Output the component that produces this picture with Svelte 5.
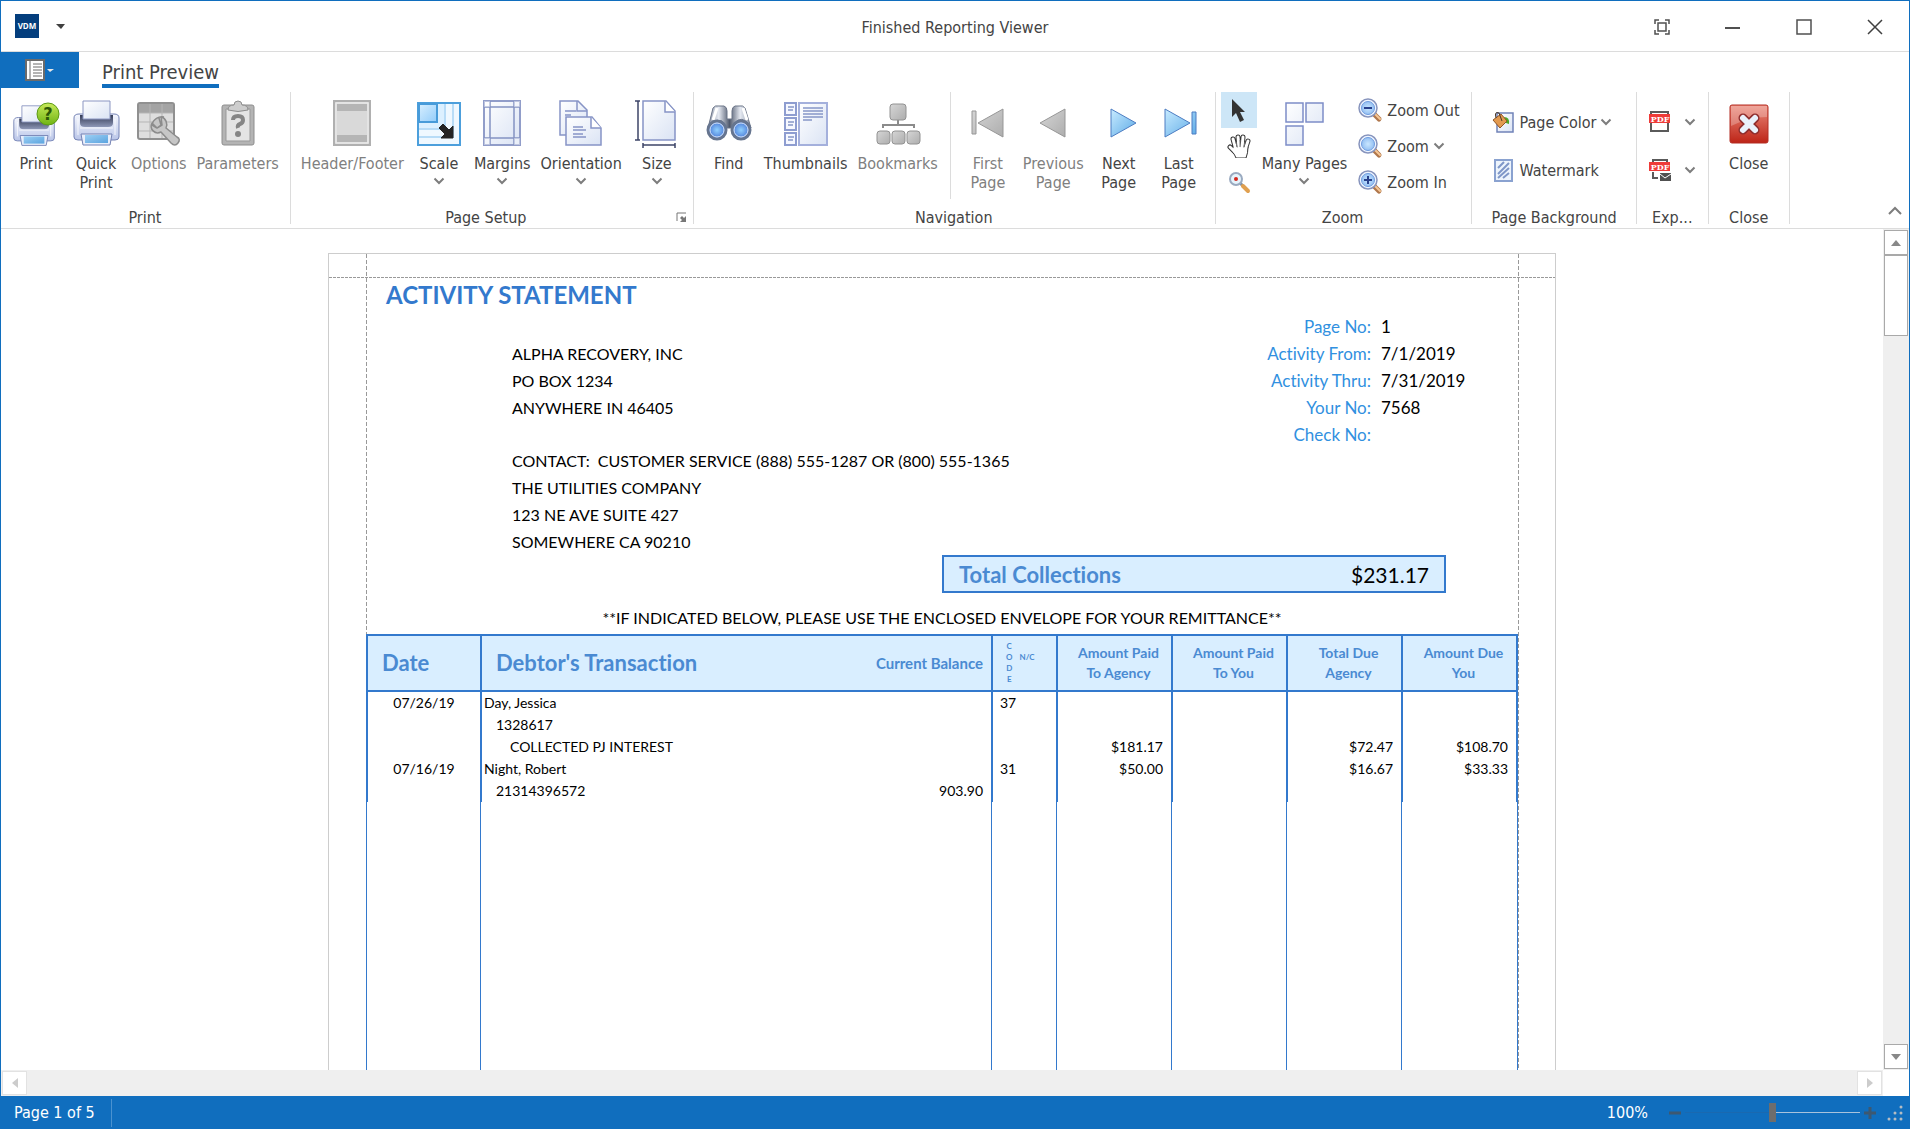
<script>
    const printTools = [
        { icon: 'print', lines: ['Print'] },
        { icon: 'quick', lines: ['Quick', 'Print'] },
        { icon: 'options', lines: ['Options'], disabled: true },
        { icon: 'parameters', lines: ['Parameters'], disabled: true }
    ];
    const setupTools = [
        { icon: 'header', lines: ['Header/Footer'], disabled: true },
        { icon: 'scale', lines: ['Scale'], menu: true },
        { icon: 'margins', lines: ['Margins'], menu: true },
        { icon: 'orientation', lines: ['Orientation'], menu: true },
        { icon: 'size', lines: ['Size'], menu: true }
    ];
    const findTools = [
        { icon: 'find', lines: ['Find'] },
        { icon: 'thumbnails', lines: ['Thumbnails'] },
        { icon: 'bookmarks', lines: ['Bookmarks'], disabled: true }
    ];
    const pageTools = [
        { icon: 'first', lines: ['First', 'Page'], disabled: true },
        { icon: 'previous', lines: ['Previous', 'Page'], disabled: true },
        { icon: 'next', lines: ['Next', 'Page'] },
        { icon: 'last', lines: ['Last', 'Page'] }
    ];

    const address = ['ALPHA RECOVERY, INC', 'PO BOX 1234', 'ANYWHERE IN 46405'];
    const contact = [
        'CONTACT:\u00a0 CUSTOMER SERVICE (888) 555-1287 OR (800) 555-1365',
        'THE UTILITIES COMPANY',
        '123 NE AVE SUITE 427',
        'SOMEWHERE CA 90210'
    ];
    const details = [
        ['Page No:', '1'],
        ['Activity From:', '7/1/2019'],
        ['Activity Thru:', '7/31/2019'],
        ['Your No:', '7568'],
        ['Check No:', '']
    ];
    const rows = [
        { date: '07/26/19', text: 'Day, Jessica', code: '37' },
        { text: '1328617', level: 1 },
        { text: 'COLLECTED PJ INTEREST', level: 2, agency: '$181.17', due: '$72.47', you: '$108.70' },
        { date: '07/16/19', text: 'Night, Robert', code: '31', agency: '$50.00', due: '$16.67', you: '$33.33' },
        { text: '21314396572', level: 1, balance: '903.90' }
    ];

    let tool = $state('pointer');
    let zoom = $state(100);
</script>

{#snippet chevron()}
    <svg class="chevron" width="12" height="8" viewBox="0 0 12 8"><path d="M1.5 1.5L6 6L10.5 1.5" fill="none" stroke="#7d7d7d" stroke-width="2" /></svg>
{/snippet}

{#snippet printer()}
    <path d="M2 19Q2 15 7 15H42Q47 15 47 19V38Q47 41 43 41H6Q2 41 2 38Z" fill="url(#body)" stroke="#7482b4" />
    <path d="M8 16H41V24Q41 28 36 28H13Q8 28 8 24Z" fill="url(#dark)" />
    <path d="M11 2H38V20H11Z" fill="url(#paper)" stroke="#8b96c2" />
    <path d="M8 29H41M6 20V36M43 20V36" stroke="#fff" stroke-opacity=".8" fill="none" />
    <path d="M9 35H40L38 46H11Z" fill="#e8eefb" stroke="#7482b4" />
    <path d="M13 36H36V44H13Z" fill="url(#sky)" />
{/snippet}

{#snippet lens(sign)}
    <svg width="26" height="26" viewBox="0 0 26 26">
        <path d="M17 17L22 22" stroke="#b0774c" stroke-width="5" stroke-linecap="round" />
        <path d="M18 17L23 22" stroke="#f6c795" stroke-width="2" stroke-linecap="round" />
        <circle cx="11" cy="11" r="9" fill="#eef5ff" stroke="#8794bd" stroke-width="1.5" />
        <circle cx="11" cy="11" r="6.5" fill="url(#glass)" stroke="#6f9ce0" />
        {#if sign}<path d={sign} stroke="#28408c" stroke-width="2" />{/if}
    </svg>
{/snippet}

{#snippet icon(name)}
    <svg class="icon" width="48" height="48" viewBox="0 0 48 48">
        {#if name === 'print'}
            <g transform="translate(0 5) scale(.9)">{@render printer()}</g>
            <circle cx="36" cy="15" r="11" fill="url(#green)" stroke="#5c9a16" />
            <text x="36" y="21" text-anchor="middle" font-size="18" font-weight="bold" fill="#2c5606">?</text>
        {:else if name === 'quick'}
            {@render printer()}
        {:else if name === 'options'}
            <rect x="3" y="4" width="36" height="36" rx="2" fill="#dedede" stroke="#909090" stroke-width="2" />
            <path d="M4 5H38V14H4Z" fill="#a4a4a4" />
            <path d="M4 14H38M4 23H38M4 32H38M15 5V39M27 5V39" stroke="#b5b5b5" />
            <path d="M29 18C24 17 18 20 17 26L22 29L26 26L24 19M17 24C14 30 20 36 26 33L36 44Q40 48 43 44T42 38L31 29C33 25 31 19 26 18L27 26L22 29Z" fill="#c6c6c6" stroke="#8c8c8c" stroke-width="1.5" stroke-linejoin="round" />
        {:else if name === 'parameters'}
            <rect x="8" y="6" width="32" height="40" rx="2" fill="#b4b4b4" stroke="#8e8e8e" />
            <path d="M12 10H36V42H12Z" fill="#e4e4e4" stroke="#999" />
            <path d="M14 11Q14 6 20 6Q20 2 24 2T28 6Q34 6 34 11Q24 14 14 11Z" fill="#cdcdcd" stroke="#8e8e8e" />
            <path d="M19 21Q19 17 24 17T29 21Q29 24 26 25T24 29" fill="none" stroke="#858585" stroke-width="4" />
            <circle cx="24" cy="35" r="3" fill="#858585" />
        {:else if name === 'header'}
            <path d="M6 2H42V46H6Z" fill="#d9d9d9" stroke="#b0b0b0" stroke-width="2" />
            <path d="M8 4H40V44H8Z" fill="none" stroke="#eee" />
            <path d="M9 5H39V12H9ZM9 36H39V43H9Z" fill="#b5b5b5" />
        {:else if name === 'scale'}
            <path d="M3 4H45V46H3Z" fill="#eff8ff" stroke="#4c9fdc" stroke-width="2" />
            <path d="M4 5H30V30H4Z" fill="#dcf0ff" />
            <path d="M4 38H38V5M4 30H30V5" fill="none" stroke="#b8dcf7" stroke-width="2" />
            <path d="M4 5H22V23H4Z" fill="url(#corner)" stroke="#489bd9" stroke-width="2" />
            <path d="M28 25L34 31L38 27V39H26L30 35L24 29Z" fill="#242424" stroke="#242424" />
        {:else if name === 'margins'}
            <path d="M6 2H42V46H6Z" fill="url(#paper)" stroke="#919dc9" stroke-width="2" />
            <path d="M12 2V46M36 2V46M6 8H42M6 39H42" stroke="#8492c2" stroke-width="1.5" />
            <path d="M6 2H12V8H6ZM36 2H42V8H36ZM6 39H12V46H6ZM36 39H42V46H36Z" fill="#fff" fill-opacity=".4" />
        {:else if name === 'orientation'}
            <path d="M3 2H21L30 11V36H3Z" fill="url(#paper)" stroke="#8794c6" stroke-width="1.5" />
            <path d="M20 2V12H30M8 12H19M8 16H14" fill="none" stroke="#8794c6" stroke-width="1.5" />
            <path d="M9 18H35L44 29V46H9Z" fill="url(#paper)" stroke="#8794c6" stroke-width="1.5" />
            <path d="M34 18V29H44" fill="#fff" stroke="#8794c6" stroke-width="1.5" />
            <path d="M16 28H26M16 31H29M16 35H26M16 38H29" stroke="#8794c6" stroke-width="1.5" />
        {:else if name === 'size'}
            <path d="M10 2H33L42 12V41H10Z" fill="url(#paper)" stroke="#8794c6" stroke-width="1.5" />
            <path d="M32 2V13H42" fill="#fff" stroke="#8794c6" stroke-width="1.5" />
            <path d="M2 2H7M2 41H7M5 2V41M10 44V49M42 44V49M10 46H42" stroke="#3e4568" stroke-width="1.5" fill="none" />
        {:else if name === 'find'}
            <path d="M8 9Q10 6 14 7H19Q22 8 22 12V20H27V12Q27 8 30 7H34Q38 6 40 9L46 29Q41 18 33 21L27 29H22L17 22Q7 19 3 29Z" fill="url(#metal)" stroke="#6b7487" />
            <path d="M12 9L8 21M38 9L42 21" stroke="#fff" stroke-width="3" />
            <circle cx="12" cy="31" r="9" fill="url(#iris)" stroke="#66758f" stroke-width="3" />
            <circle cx="36" cy="31" r="9" fill="url(#iris)" stroke="#66758f" stroke-width="3" />
            <circle cx="12" cy="31" r="7" fill="none" stroke="#d5e3f8" />
            <circle cx="36" cy="31" r="7" fill="none" stroke="#d5e3f8" />
        {:else if name === 'thumbnails'}
            <path d="M3 4H14V16H3ZM3 19H14V31H3ZM3 34H14V46H3Z" fill="#f6f8ff" stroke="#8e9dd0" stroke-width="2" />
            <path d="M17 4H45V46H17Z" fill="url(#paper)" stroke="#a4b0dc" stroke-width="2" />
            <path d="M6 8H12M6 11H11M6 23H12M6 26H11M6 38H12M6 41H11M21 9H41M21 12H41M21 15H41M21 18H41M21 21H30" stroke="#8796c8" stroke-width="1.5" />
        {:else if name === 'bookmarks'}
            <path d="M24 20V27M9 29V26H40V29" fill="none" stroke="#8b8b8b" stroke-width="2" />
            <g fill="url(#gray)" stroke="#929292">
                <rect x="16" y="5" width="16" height="16" rx="3" />
                <rect x="3" y="32" width="13" height="13" rx="3" />
                <rect x="18" y="32" width="13" height="13" rx="3" />
                <rect x="33" y="32" width="13" height="13" rx="3" />
            </g>
        {:else if name === 'first'}
            <path d="M8 12H12V35H8ZM39 10V38L14 24Z" fill="url(#gray)" stroke="#979797" />
        {:else if name === 'previous'}
            <path d="M36 10V38L11 24Z" fill="url(#gray)" stroke="#979797" />
        {:else if name === 'next'}
            <path d="M16 10V38L41 24Z" fill="url(#blue)" stroke="#4d7dc2" />
        {:else if name === 'last'}
            <path d="M10 10V38L35 24ZM37 13H41V35H37Z" fill="url(#blue)" stroke="#4d7dc2" />
        {:else if name === 'many'}
            <path d="M6 4H23V23H6ZM26 4H43V23H26ZM6 27H23V46H6Z" fill="url(#paper)" stroke="#7d8dc8" stroke-width="1.5" />
        {:else if name === 'close'}
            <rect x="5" y="6" width="38" height="38" rx="2" fill="url(#red)" stroke="#b32c22" />
            <path d="M6 7H42V18Q24 18 6 27Z" fill="#fff" fill-opacity=".25" />
            <path d="M18 19L30 31M30 19L18 31" stroke="#8e2d2d" stroke-width="9" stroke-linecap="round" />
            <path d="M18 19L30 31M30 19L18 31" stroke="#eaf1fb" stroke-width="6" stroke-linecap="round" />
        {/if}
    </svg>
{/snippet}

{#snippet large(item)}
    <button class="large" disabled={item.disabled}>
        {@render icon(item.icon)}
        {#each item.lines as line}<span>{line}</span>{/each}
        {#if item.menu}{@render chevron()}{/if}
    </button>
{/snippet}

{#snippet pdf(mail)}
    <svg width="22" height="24" viewBox="0 0 22 24">
        {#if mail}
            <path d="M4 5V2H18V5M4 14V20H9" fill="none" stroke="#5a5a5a" stroke-width="2" />
            <path d="M11 15H22V23H11Z" fill="#505050" />
            <path d="M11 16L16 20L22 16" fill="none" stroke="#fff" />
        {:else}
            <path d="M2 2H19V21H2Z" fill="#fff" stroke="#5a5a5a" stroke-width="2" />
        {/if}
        <path d="M0 4H21V13H0Z" fill="#ee3b38" />
        <text class="badge" x="11" y="12" text-anchor="middle" font-size="8" font-weight="bold" fill="#fff">PDF</text>
    </svg>
{/snippet}

<svg class="defs" width="0" height="0" aria-hidden="true">
    <defs>
        <linearGradient id="body" x2="0" y2="1"><stop stop-color="#f6f8fe" /><stop offset="1" stop-color="#b9c5e8" /></linearGradient>
        <linearGradient id="dark" x2="0" y2="1"><stop stop-color="#343b55" /><stop offset="1" stop-color="#8e98b7" /></linearGradient>
        <linearGradient id="paper" x2="1" y2="1"><stop stop-color="#fff" /><stop offset="1" stop-color="#dae3f4" /></linearGradient>
        <linearGradient id="sky" x2="1" y2="1"><stop stop-color="#9ccff4" /><stop offset="1" stop-color="#5ba4df" /></linearGradient>
        <linearGradient id="blue" x2="1" y2="1"><stop stop-color="#c8ebff" /><stop offset="1" stop-color="#5caae6" /></linearGradient>
        <linearGradient id="corner" x2="1" y2="1"><stop stop-color="#d8efff" /><stop offset="1" stop-color="#92ccfa" /></linearGradient>
        <linearGradient id="gray" x2="1" y2="1"><stop stop-color="#d6d6d6" /><stop offset="1" stop-color="#adadad" /></linearGradient>
        <linearGradient id="green" x2="0" y2="1"><stop stop-color="#c8ea5a" /><stop offset="1" stop-color="#6fb413" /></linearGradient>
        <linearGradient id="red" x2="0" y2="1"><stop stop-color="#eb8a7b" /><stop offset="1" stop-color="#bd2417" /></linearGradient>
        <linearGradient id="metal"><stop stop-color="#8993a6" /><stop offset=".25" stop-color="#e6eaf2" /><stop offset=".5" stop-color="#4f596d" /><stop offset=".75" stop-color="#e6eaf2" /><stop offset="1" stop-color="#8993a6" /></linearGradient>
        <radialGradient id="iris"><stop stop-color="#8fd0ff" /><stop offset="1" stop-color="#4673d3" /></radialGradient>
        <radialGradient id="glass"><stop stop-color="#c9e6ff" /><stop offset="1" stop-color="#94c0f2" /></radialGradient>
    </defs>
</svg>

<div class="window">
    <header class="titlebar">
        <svg class="logo" width="24" height="24" viewBox="0 0 24 24">
            <path d="M0 0H24V24H0Z" fill="#043e7d" />
            <text x="12" y="15" text-anchor="middle" font-size="8" font-weight="bold" fill="#fff">VDM</text>
        </svg>
        <button class="quick-menu" aria-label="Customize toolbar">
            <svg width="9" height="5" viewBox="0 0 9 5"><path d="M0 0H9L5 5Z" fill="#404040" /></svg>
        </button>
        <h1>Finished Reporting Viewer</h1>
        <div class="controls">
            <button aria-label="Full screen">
                <svg width="16" height="16" viewBox="0 0 16 16" fill="none" stroke="#505050" stroke-width="1.5"><path d="M1 5V1H5M11 1H15V5M15 11V15H11M5 15H1V11M4 4H12V12H4Z" /></svg>
            </button>
            <button aria-label="Minimize">
                <svg width="16" height="16" viewBox="0 0 16 16"><path d="M0 8H15V10H0Z" fill="#505050" /></svg>
            </button>
            <button aria-label="Maximize">
                <svg width="16" height="16" viewBox="0 0 16 16"><path d="M1 1H15V15H1Z" fill="none" stroke="#505050" stroke-width="1.5" /></svg>
            </button>
            <button aria-label="Close window">
                <svg width="16" height="16" viewBox="0 0 16 16"><path d="M1 1L15 15M15 1L1 15" stroke="#404040" stroke-width="1.5" /></svg>
            </button>
        </div>
    </header>

    <nav class="tabs">
        <button class="file" aria-label="File">
            <svg width="30" height="22" viewBox="0 0 30 22">
                <path d="M1 1H19V21H1Z" fill="#fff" stroke="#6b6b6b" stroke-width="2" />
                <path d="M5 1V21M8 5H17M8 8H17M8 11H17M8 14H17M8 17H17" stroke="#6b6b6b" />
                <path d="M22 10H29L25 13Z" fill="#e8e8e8" />
            </svg>
        </button>
        <a href="#preview">Print Preview</a>
    </nav>

    <div class="ribbon">
        <section class="group">
            <div class="tools">{#each printTools as item}{@render large(item)}{/each}</div>
            <footer><span>Print</span></footer>
        </section>
        <section class="group">
            <div class="tools">{#each setupTools as item}{@render large(item)}{/each}</div>
            <footer>
                <span>Page Setup</span>
                <button class="launcher" aria-label="Page setup dialog">
                    <svg width="11" height="11" viewBox="0 0 11 11"><path d="M1 9V1H10" fill="none" stroke="#777" /><path d="M10 4V10H4L6 8L4 6L6 4L8 6Z" fill="#777" /></svg>
                </button>
            </footer>
        </section>
        <section class="group">
            <div class="tools">
                {#each findTools as item}{@render large(item)}{/each}
                <i class="divider"></i>
                {#each pageTools as item}{@render large(item)}{/each}
            </div>
            <footer><span>Navigation</span></footer>
        </section>
        <section class="group">
            <div class="tools">
                <div class="pickers">
                    <button class:active={tool === 'pointer'} aria-label="Pointer" onclick={() => (tool = 'pointer')}>
                        <svg width="24" height="24" viewBox="0 0 24 24"><path d="M5 1V19L9 15L13 24L17 22L13 14H18Z" fill="#333" /></svg>
                    </button>
                    <button class:active={tool === 'hand'} aria-label="Hand tool" onclick={() => (tool = 'hand')}>
                        <svg width="24" height="24" viewBox="0 0 24 24">
                            <path d="M9 16L6 5M12 14L11 3M15 14L16 3M18 16L21 7M8 18L3 13" stroke="#333" stroke-width="5" stroke-linecap="round" />
                            <path d="M6 13H21Q21 19 19 24H9Q8 21 5 17Z" fill="#fff" stroke="#333" stroke-linejoin="round" />
                            <path d="M9 16L6 5M12 14L11 3M15 14L16 3M18 16L21 7M8 18L3 13" stroke="#fff" stroke-width="3" stroke-linecap="round" />
                            <path d="M9 8L10 13M13 6V13M18 8L17 13" stroke="#777" />
                        </svg>
                    </button>
                    <button class:active={tool === 'magnifier'} aria-label="Magnifier" onclick={() => (tool = 'magnifier')}>
                        <svg width="24" height="24" viewBox="0 0 24 24"><path d="M13 13L16 16" stroke="#7c8ca0" stroke-width="3" /><path d="M16 16L21 21" stroke="#e0a050" stroke-width="4" stroke-linecap="round" /><circle cx="9" cy="9" r="6" fill="#e6f4fc" stroke="#9aaac0" stroke-width="2" /><circle cx="9" cy="9" r="2" fill="#d5281e" /></svg>
                    </button>
                </div>
                {@render large({ icon: 'many', lines: ['Many Pages'], menu: true })}
                <div class="stack">
                    <button class="small">{@render lens('M7 11H15')}<span>Zoom Out</span></button>
                    <button class="small">{@render lens('')}<span>Zoom</span>{@render chevron()}</button>
                    <button class="small">{@render lens('M7 11H15M11 7V15')}<span>Zoom In</span></button>
                </div>
            </div>
            <footer><span>Zoom</span></footer>
        </section>
        <section class="group background">
            <div class="tools">
                <div class="stack tall">
                    <button class="small">
                        <svg width="24" height="24" viewBox="0 0 24 24">
                            <path d="M5 3H21V22H5Z" fill="url(#paper)" stroke="#7082b8" stroke-width="1.5" />
                            <path d="M12 7Q18 7 17 14L14 13Z" fill="#4ca826" />
                            <path d="M1 10L9 4L15 11L8 18Z" fill="#e29a50" stroke="#915626" />
                            <path d="M4 8Q2 1 7 3L10 11" fill="none" stroke="#4a3726" />
                        </svg>
                        <span>Page Color</span>{@render chevron()}
                    </button>
                    <button class="small">
                        <svg width="24" height="24" viewBox="0 0 24 24">
                            <path d="M3 2H20V23H3Z" fill="#edf4fc" stroke="#8aa2d0" stroke-width="2" />
                            <path d="M6 10L12 4M6 16L17 5M6 20L17 10M11 20L17 15" stroke="#7f97c8" stroke-width="2" />
                        </svg>
                        <span>Watermark</span>
                    </button>
                </div>
            </div>
            <footer><span>Page Background</span></footer>
        </section>
        <section class="group export">
            <div class="tools">
                <div class="stack tall">
                    <button class="small" aria-label="Export to PDF">{@render pdf(false)}{@render chevron()}</button>
                    <button class="small" aria-label="E-mail as PDF">{@render pdf(true)}{@render chevron()}</button>
                </div>
            </div>
            <footer><span>Exp...</span></footer>
        </section>
        <section class="group close">
            <div class="tools">{@render large({ icon: 'close', lines: ['Close'] })}</div>
            <footer><span>Close</span></footer>
        </section>
        <button class="collapse" aria-label="Collapse ribbon">
            <svg width="14" height="9" viewBox="0 0 14 9"><path d="M1 8L7 2L13 8" fill="none" stroke="#7d7d7d" stroke-width="2" /></svg>
        </button>
    </div>

    <div class="workspace">
        <main id="preview">
            <article class="paper">
                <div class="printable">
                    <h2>ACTIVITY STATEMENT</h2>
                    <div class="parties">
                        <div class="names">
                            <div>{#each address as line}<p>{line}</p>{/each}</div>
                            <div>{#each contact as line}<p>{line}</p>{/each}</div>
                        </div>
                        <dl>
                            {#each details as [label, value]}
                                <dt>{label}</dt>
                                <dd>{value}</dd>
                            {/each}
                        </dl>
                    </div>
                    <div class="total"><strong>Total Collections</strong><span>$231.17</span></div>
                    <p class="notice">**IF INDICATED BELOW, PLEASE USE THE ENCLOSED ENVELOPE FOR YOUR REMITTANCE**</p>
                    <table>
                        <colgroup>
                            <col class="date" /><col /><col class="code" />
                            <col class="money" /><col class="money" /><col class="money" /><col class="money" />
                        </colgroup>
                        <thead>
                            <tr>
                                <th class="title">Date</th>
                                <th class="title"><div class="debtor">Debtor's Transaction <small>Current Balance</small></div></th>
                                <th class="codes"><div><span>C<br />O<br />D<br />E</span><span><br />N/C</span></div></th>
                                <th>Amount Paid<br />To Agency</th>
                                <th>Amount Paid<br />To You</th>
                                <th>Total Due<br />Agency</th>
                                <th>Amount Due<br />You</th>
                            </tr>
                        </thead>
                        <tbody>
                            {#each rows as row}
                                <tr>
                                    <td class="center">{row.date ?? ''}</td>
                                    <td>
                                        <div class="entry" class:one={row.level === 1} class:two={row.level === 2}>
                                            <span>{row.text}</span><span>{row.balance ?? ''}</span>
                                        </div>
                                    </td>
                                    <td class="number">{row.code ?? ''}</td>
                                    <td class="amount">{row.agency ?? ''}</td>
                                    <td></td>
                                    <td class="amount">{row.due ?? ''}</td>
                                    <td class="amount">{row.you ?? ''}</td>
                                </tr>
                            {/each}
                            <tr class="blank"><td></td><td></td><td></td><td></td><td></td><td></td><td></td></tr>
                        </tbody>
                    </table>
                </div>
            </article>
        </main>
        <div class="scroll vertical">
            <button aria-label="Scroll up"><svg width="10" height="6" viewBox="0 0 10 6"><path d="M0 6L5 0L10 6Z" fill="#888" /></svg></button>
            <div class="thumb"></div>
            <button aria-label="Scroll down"><svg width="10" height="6" viewBox="0 0 10 6"><path d="M0 0L5 6L10 0Z" fill="#888" /></svg></button>
        </div>
        <div class="scroll horizontal">
            <button aria-label="Scroll left" disabled><svg width="6" height="10" viewBox="0 0 6 10"><path d="M6 0L0 5L6 10Z" fill="#ccc" /></svg></button>
            <button aria-label="Scroll right" disabled><svg width="6" height="10" viewBox="0 0 6 10"><path d="M0 0L6 5L0 10Z" fill="#ccc" /></svg></button>
        </div>
    </div>

    <footer class="status">
        <span class="page">Page 1 of 5</span>
        <label for="zoom">{zoom}%</label>
        <button aria-label="Zoom out" onclick={() => (zoom -= 10)}>
            <svg width="14" height="14" viewBox="0 0 14 14"><path d="M1 7H13" stroke="#3d5871" stroke-width="3" /></svg>
        </button>
        <input id="zoom" type="range" min="0" max="200" bind:value={zoom} />
        <button aria-label="Zoom in" onclick={() => (zoom += 10)}>
            <svg width="14" height="14" viewBox="0 0 14 14"><path d="M1 7H13M7 1V13" stroke="#3d5871" stroke-width="3" /></svg>
        </button>
        <svg class="grip" width="16" height="16" viewBox="0 0 16 16" fill="#b5bcc3">
            <circle cx="14" cy="2" r="1.5" /><circle cx="8" cy="8" r="1.5" /><circle cx="14" cy="8" r="1.5" />
            <circle cx="2" cy="14" r="1.5" /><circle cx="8" cy="14" r="1.5" /><circle cx="14" cy="14" r="1.5" />
        </svg>
    </footer>
</div>

<style>
    .window {
        box-sizing: border-box;
        height: 100vh;
        display: flex;
        flex-direction: column;
        border: 1px solid #106ebe;
        border-bottom: none;
        background: #fff;
        color: #444;
        font: 16px/19px "DejaVu Sans Condensed", "Noto Sans", sans-serif;
    }

    .defs {
        position: absolute;
    }

    svg {
        display: block;
        flex: none;
    }

    button {
        box-sizing: border-box;
        display: flex;
        align-items: center;
        justify-content: center;
        padding: 0;
        border: none;
        background: none;
        color: inherit;
        font: inherit;
        white-space: nowrap;
    }

    button:disabled {
        color: #808080;
    }

    h1, h2, p, dl, dd {
        margin: 0;
        font-size: inherit;
        font-weight: normal;
    }

    .titlebar {
        display: grid;
        grid-template-columns: auto auto 1fr auto;
        align-items: center;
        height: 50px;
        padding-left: 14px;
        border-bottom: 1px solid #dcdcdc;
    }

    .logo text {
        font-family: "Open Sans", sans-serif;
    }

    .quick-menu {
        width: 42px;
        height: 30px;
    }

    .titlebar h1 {
        padding: 2px 0 0 204px;
        text-align: center;
    }

    .controls {
        display: flex;
    }

    .controls button {
        width: 71px;
        height: 50px;
        padding: 2px 0 0 2px;
    }

    .tabs {
        display: flex;
        gap: 23px;
        height: 36px;
    }

    .file {
        width: 78px;
        background: #106ebe;
    }

    .tabs a {
        box-sizing: border-box;
        border-bottom: 4px solid #106ebe;
        padding-top: 8px;
        color: #444;
        font-size: 20px;
        line-height: 24px;
        text-decoration: none;
    }

    .ribbon {
        display: flex;
        padding: 4px 0;
        border-bottom: 1px solid #dcdcdc;
    }

    .group {
        display: flex;
        flex-direction: column;
        justify-content: space-between;
        height: 132px;
        padding: 0 6px 0 5px;
        border-right: 1px solid #dcdcdc;
    }

    .group footer {
        display: flex;
        align-items: center;
        height: 14px;
    }

    .group footer span {
        flex: 1;
        text-align: center;
    }

    .tools {
        display: flex;
    }

    .large {
        flex-direction: column;
        justify-content: flex-start;
        min-width: 60px;
        padding: 7px 5px 0;
    }

    .large .icon {
        margin-bottom: 7px;
        overflow: visible;
    }

    .large .chevron {
        margin-top: 4px;
    }

    .divider {
        height: 107px;
        margin: 0 7px;
        border-left: 1px solid #dcdcdc;
    }

    .pickers button {
        width: 36px;
        height: 36px;
    }

    .pickers .active {
        background: #cde6f7;
    }

    .stack {
        padding: 0 5px;
    }

    .small {
        gap: 4px;
        height: 36px;
    }

    .stack.tall {
        padding: 6px 0 0;
    }

    .tall .small {
        height: 48px;
    }

    .background {
        padding: 0 19px 0 20px;
    }

    .export {
        padding: 0 12px;
    }

    .export .small {
        gap: 13px;
    }

    .badge {
        font-family: "DejaVu Serif", serif;
    }

    .close {
        padding: 0 10px;
    }

    .collapse {
        align-self: flex-end;
        margin: 0 7px 9px auto;
    }

    .workspace {
        flex: 1;
        min-height: 0;
        display: grid;
        grid-template: minmax(0, 1fr) 26px / 1fr 26px;
    }

    main {
        overflow: hidden;
    }

    .paper {
        box-sizing: border-box;
        width: 1228px;
        margin: 24px auto;
        padding: 0 37px;
        border: 1px solid #cdcdcd;
        background:
            repeating-linear-gradient(90deg, #999 0 3px, transparent 3px 4px) 0 23px / 100% 1px no-repeat,
            repeating-linear-gradient(#999 0 4px, transparent 4px 6px) 37px 0 / 1px 100% no-repeat,
            repeating-linear-gradient(#999 0 4px, transparent 4px 6px) calc(100% - 36px) 0 / 1px 100% no-repeat;
        color: #000;
        font: 16px/27px Lato, sans-serif;
        font-variant-ligatures: none;
    }

    .printable {
        padding-top: 23px;
    }

    h2 {
        padding-left: 20px;
        color: #3379cd;
        font-size: 24px;
        font-weight: bold;
        line-height: 36px;
    }

    .parties {
        display: flex;
        justify-content: space-between;
        padding-left: 146px;
    }

    .names {
        display: grid;
        gap: 26px;
        padding-top: 27px;
    }

    dl {
        display: grid;
        grid-template-columns: auto 137px;
        grid-auto-rows: 27px;
        column-gap: 10px;
        font-size: 17px;
    }

    dt {
        color: #3190e0;
        text-align: right;
    }

    .total {
        box-sizing: border-box;
        display: flex;
        align-items: center;
        justify-content: space-between;
        width: 504px;
        height: 38px;
        margin: 0 72px 0 auto;
        padding: 0 15px;
        border: 2px solid #3379cd;
        background: #d9eeff;
        font-size: 21px;
    }

    .total strong {
        color: #4a8ad2;
        font-size: 22px;
    }

    .notice {
        margin: 11px 0 3px;
        text-align: center;
    }

    table {
        width: 100%;
        table-layout: fixed;
        border-spacing: 0;
        font-size: 14px;
        line-height: 22px;
    }

    .date {
        width: 114px;
    }

    .code {
        width: 65px;
    }

    .money {
        width: 115px;
    }

    .money:last-child {
        width: 117px;
    }

    th, td {
        box-sizing: border-box;
        padding: 0;
        border-left: 2px solid #3379cd;
    }

    th:last-child, td:last-child {
        border-right: 2px solid #3379cd;
    }

    th {
        height: 58px;
        padding-left: 8px;
        border-top: 2px solid #3379cd;
        border-bottom: 2px solid #3379cd;
        background: #d9eeff;
        color: #4a8ad2;
        line-height: 20px;
    }

    .title {
        padding-left: 14px;
        font-size: 22px;
        text-align: left;
    }

    .debtor, .entry {
        display: flex;
        align-items: center;
        justify-content: space-between;
        padding-right: 8px;
    }

    .debtor small {
        font-size: 15px;
    }

    .codes div {
        display: flex;
        gap: 7px;
        padding-left: 5px;
        font-size: 8px;
        line-height: 11px;
    }

    td {
        height: 22px;
    }

    .center {
        text-align: center;
    }

    .entry {
        padding-left: 2px;
    }

    .entry.one {
        padding-left: 14px;
    }

    .entry.two {
        padding-left: 28px;
    }

    .number {
        padding-left: 7px;
    }

    .amount {
        padding-right: 8px;
        text-align: right;
    }

    .blank td {
        height: 720px;
        border-left-width: 1px;
    }

    .blank td:last-child {
        border-right-width: 1px;
    }

    .scroll {
        display: flex;
        background: #efefef;
    }

    .scroll button, .thumb {
        box-sizing: border-box;
        width: 24px;
        height: 25px;
        border: 1px solid #a9a9a9;
        background: #fff;
    }

    .vertical {
        flex-direction: column;
        padding: 1px;
    }

    .vertical .thumb {
        height: 81px;
    }

    .vertical button:last-child {
        margin-top: auto;
    }

    .horizontal {
        justify-content: space-between;
        padding: 1px;
    }

    .horizontal button {
        width: 25px;
        height: 24px;
        border-color: #e2e2e2;
    }

    .status {
        display: flex;
        align-items: center;
        height: 33px;
        padding: 0 6px 0 13px;
        background: #106ebe;
        color: #fff;
    }

    .page {
        margin-right: auto;
        padding-right: 16px;
        border-right: 1px solid #4a92d0;
        line-height: 28px;
    }

    .status label {
        margin-right: 20px;
    }

    input {
        appearance: none;
        width: 175px;
        height: 20px;
        margin: 0 3px;
        background: linear-gradient(90deg, #1a69b0 50%, #a9c3dc 50%) center / 100% 1px no-repeat;
    }

    input::-webkit-slider-thumb {
        appearance: none;
        width: 7px;
        height: 19px;
        background: #6d6d6d;
    }

    .grip {
        margin-left: 10px;
    }
</style>
